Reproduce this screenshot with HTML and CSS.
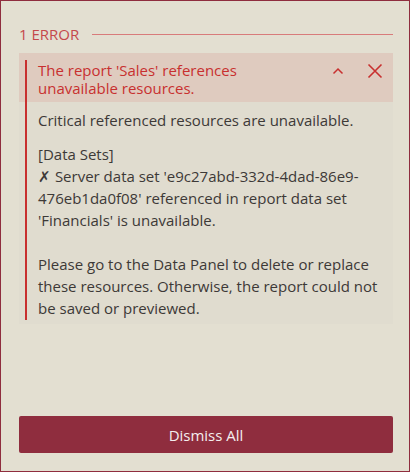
FILE: index.html
```html
<!DOCTYPE html>
<html>
<head>
<meta charset="utf-8">
<link rel="stylesheet" href="styles.css">
</head>
<body>
<div class="panel">
  <div class="title-row">
    <span class="title">1 ERROR</span>
    <span class="rule"></span>
  </div>
  <div class="card">
    <div class="card-head">
      <div class="head-text">The report 'Sales' references unavailable resources.</div>
      <div class="head-icons">
        <svg class="ico chev" width="14" height="10" viewBox="0 0 14 10"><path d="M2.5 7.5 L7 3 L11.5 7.5" fill="none" stroke="#c8302f" stroke-width="1.5"/></svg>
        <svg class="ico close" width="16" height="16" viewBox="0 0 16 16"><path d="M1.5 1.5 L14.5 14.5 M14.5 1.5 L1.5 14.5" fill="none" stroke="#c8302f" stroke-width="1.6"/></svg>
      </div>
    </div>
    <div class="card-body">
      <p class="para">Critical referenced resources are unavailable.</p>
      <p class="para">[Data Sets]<br>✗ Server data set 'e9c27abd-332d-4dad-86e9-476eb1da0f08' referenced in report data set 'Financials' is unavailable.<br><br>Please go to the Data Panel to delete or replace these resources. Otherwise, the report could not be saved or previewed.</p>
    </div>
  </div>
  <button class="dismiss">Dismiss All</button>
</div>
</body>
</html>
```
FILE: styles.css
```css
html, body {
  margin: 0;
  padding: 0;
}
body {
  font-family: "Open Sans", "Noto Sans", sans-serif;
  background: #e3dfd1;
}
.panel {
  box-sizing: border-box;
  width: 410px;
  height: 472px;
  border: 1px solid #8f2d3e;
  background: #e3dfd1;
  padding: 23px 16px 18px 18px;
  display: flex;
  flex-direction: column;
}
.title-row {
  display: flex;
  align-items: center;
  height: 20px;
  gap: 13px;
}
.title {
  font-size: 15px;
  color: #c5494c;
  line-height: 20px;
  white-space: nowrap;
}
.rule {
  flex: 1;
  height: 1px;
  background: #d87b7b;
}
.card {
  position: relative;
  margin-top: 9px;
  background: #e0dccf;
  padding-bottom: 5px;
}
.card::before {
  content: "";
  position: absolute;
  left: 6px;
  top: 7px;
  bottom: 4px;
  width: 2px;
  background: #c8302f;
}
.card-head {
  background: #dfcbbf;
  display: flex;
  align-items: flex-start;
  padding: 8px 10px 5px 19px;
}
.head-text {
  flex: 1;
  font-size: 15px;
  line-height: 18px;
  color: #c8302f;
  padding-right: 70px;
}
.head-icons {
  display: flex;
  align-items: center;
  gap: 22px;
  padding-top: 2px;
}
.chev {
  display: block;
}
.close {
  display: block;
}
.card-body {
  padding: 7px 10px 0 19px;
  color: #3d3937;
  font-size: 15px;
  line-height: 22px;
}
.para {
  margin: 0;
}
.para + .para {
  margin-top: 12px;
}
.dismiss {
  margin-top: auto;
  height: 37px;
  border: none;
  border-radius: 2px;
  background: #8f2d3e;
  color: #f4eeee;
  font-family: "Open Sans", "Noto Sans", sans-serif;
  font-size: 15px;
  padding: 0;
}
```
